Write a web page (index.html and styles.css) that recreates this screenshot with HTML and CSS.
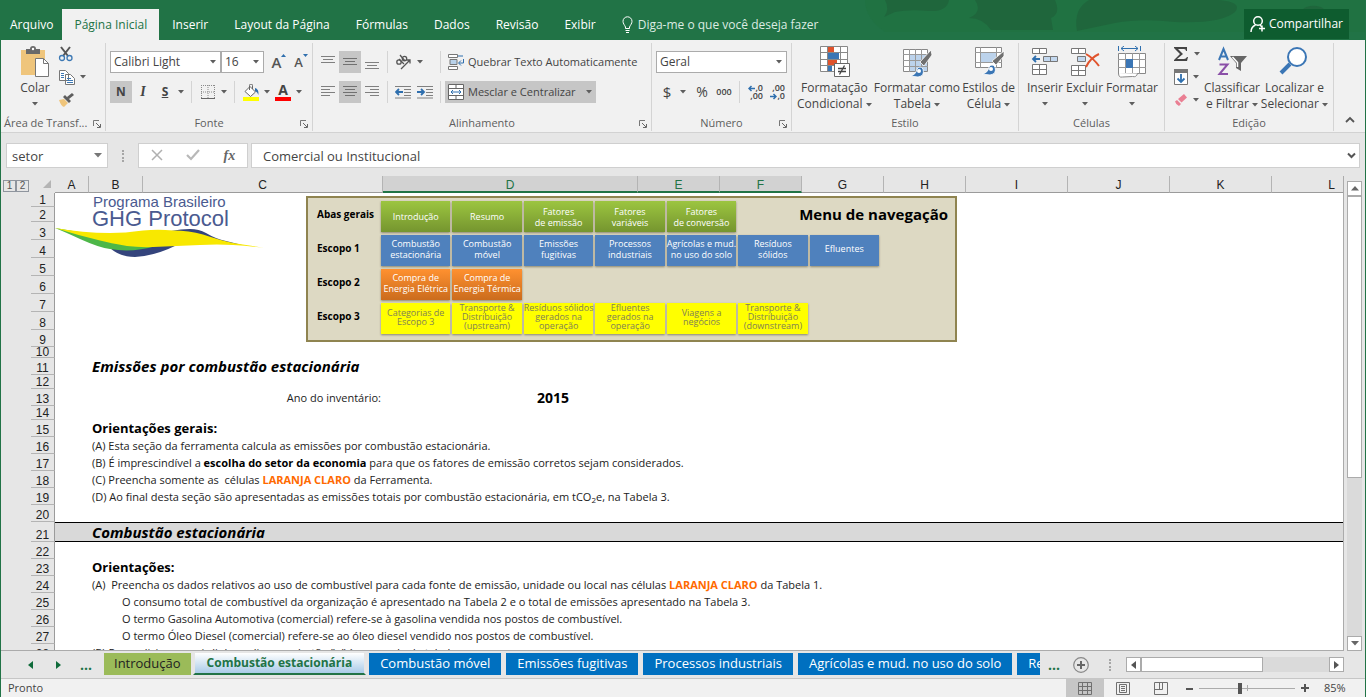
FILE: index.html
```html
<!DOCTYPE html>
<html lang="pt-BR">
<head>
<meta charset="utf-8">
<title>GHG Protocol - Excel</title>
<link rel="stylesheet" href="styles.css">
</head>
<body>
<svg class="defs" aria-hidden="true">
  <symbol id="caret" viewBox="0 0 6 4"><path d="M0 0h6L3 3.5z" fill="#5e5e5e"/></symbol>
  <symbol id="launch" viewBox="0 0 8 8"><path d="M.5 6V.5H6" fill="none" stroke="#777"/><path d="M3 3l4 4M7.5 4v3.5H4" fill="none" stroke="#666"/></symbol>
</svg>
<div class="app">
  <header class="titlebar">
    <svg class="texture" viewBox="0 0 500 32" aria-hidden="true">
      <path d="M0 0h500v32H20Q0 18 0 0z" fill="#20703f" opacity=".45"/>
      <g fill="#1f663c"><path d="M20 0h64q-2 12-20 11-20-2-34 1l-11 5q6-8 1-17z"/><path d="M110 0h80q6 14-4 18l2 12h-62q-8-12-22-12 14-6 6-18z"/><path d="M224 0h130q24 2 16 12-14 12-60 10-34-4-60 1l-38 8q-4-22 12-31z"/><path d="M437 10a14 10 0 0 1 23 0z"/></g>
    </svg>
    <nav class="tabs">
      <button class="tab">Arquivo</button>
      <button class="tab tab-on">Página Inicial</button>
      <button class="tab">Inserir</button>
      <button class="tab">Layout da Página</button>
      <button class="tab">Fórmulas</button>
      <button class="tab">Dados</button>
      <button class="tab">Revisão</button>
      <button class="tab">Exibir</button>
    </nav>
    <button class="tell"><svg width="11" height="18" viewBox="0 0 11 18" fill="none" stroke="#fff"><path d="M3.5 12.500V11C2.500 9 1 7.500 1 5.300a4.500 4.500 0 0 1 9 0C10 7.500 8.500 9 7.500 11v1.500zM3.500 14.500h4M4 16.500h3"/></svg>Diga-me o que você deseja fazer</button>
    <button class="share"><svg width="16" height="18" viewBox="0 0 16 18" fill="none" stroke="#fff" stroke-width="1.500"><circle cx="8" cy="6" r="4.300"/><path d="M1 17c0-4 2-6 4.500-7M10 10l2 2M12 10.500v6M9 13.500h6"/></svg>Compartilhar</button>
  </header>

  <section class="ribbon" aria-label="Página Inicial">
    <div class="group g-clip">
      <div class="body">
        <button class="big"><svg width="30" height="32" viewBox="0 0 30 32"><path d="M1 4h24v25H1z" fill="#efc57c"/><path d="M6 3h4a3 3 0 0 1 6 0h4v5H6z" fill="#6a6a6a"/><circle cx="13" cy="3" r="1.200" fill="#fff"/><path d="M15.500 12.500h8l5 5v13h-13z" fill="#fff" stroke="#777"/><path d="M23.500 12.500v5h5" fill="none" stroke="#777"/></svg><span>Colar</span><svg class="caret"><use href="#caret"/></svg></button>
        <div class="smalls">
          <button class="ico" aria-label="Recortar"><svg width="16" height="16" viewBox="0 0 16 16" fill="none"><path d="M3 1l7 9M12 1L5 10" stroke="#555" stroke-width="2"/><circle cx="4" cy="12" r="2.500" stroke="#3c78b4" stroke-width="1.300"/><circle cx="11.500" cy="12" r="2.500" stroke="#3c78b4" stroke-width="1.300"/></svg></button>
          <button class="ico ico-drop" aria-label="Copiar"><svg width="16" height="15" viewBox="0 0 16 15"><path d="M.5.500h6l3 3v7h-9zM6.500 4.500h5l4 4v6h-9z" fill="#fff" stroke="#777"/><path d="M2 3.500h3M2 5.500h3M2 7.500h3M8 8.500h4M8 10.500h6M8 12.500h6" stroke="#3c78b4"/></svg><svg class="caret"><use href="#caret"/></svg></button>
          <button class="ico" aria-label="Pincel de formatação"><svg width="16" height="15" viewBox="0 0 16 15"><path d="M1 7l5-1 4 4-4 4q-3-1-5-7z" fill="#efc57c"/><path d="M5 4l2-2 6 6-2 2zM9 4l5-4 2 2-5 4z" fill="#5e5e5e"/></svg></button>
        </div>
      </div>
      <div class="foot foot-left">Área de Transf...<svg class="launch"><use href="#launch"/></svg></div>
    </div>

    <div class="group g-font">
      <div class="body lines">
        <div class="line">
          <label class="combo c-font"><select aria-label="Fonte"><option>Calibri Light</option></select><svg class="caret"><use href="#caret"/></svg></label><label class="combo c-size"><select aria-label="Tamanho da fonte"><option>16</option></select><svg class="caret"><use href="#caret"/></svg></label>
          <button class="ico grow">A<svg width="5" height="3"><path d="M0 3h5L2.500 0z" fill="#2f6fae"/></svg></button>
          <button class="ico grow shrink">A<svg width="5" height="3"><path d="M0 0h5L2.500 3z" fill="#2f6fae"/></svg></button>
        </div>
        <div class="line">
          <button class="ico on"><b>N</b></button>
          <button class="ico"><b class="serif">I</b></button>
          <button class="ico"><b class="under">S</b></button>
          <button class="drop" aria-label="Sublinhado"><svg class="caret"><use href="#caret"/></svg></button>
          <i class="sep"></i>
          <button class="ico" aria-label="Bordas"><svg width="14" height="14" viewBox="0 0 14 14" fill="none" stroke="#8a8a8a"><path d="M.5 0v13M13.500 0v13M0 .5h14M7 0v13M0 7h14" stroke-dasharray="1 1"/><path d="M0 13.500h14" stroke="#666"/></svg></button>
          <button class="drop" aria-label="Mais bordas"><svg class="caret"><use href="#caret"/></svg></button>
          <i class="sep"></i>
          <button class="ico" aria-label="Cor de preenchimento"><svg width="17" height="17" viewBox="0 0 17 17"><path d="M2 7.500l5-5 5.500 5.500-5 4.500z" fill="#fff" stroke="#666"/><path d="M6.500 6V1.500a1.500 1.500 0 0 1 3 0V5" fill="none" stroke="#666"/><path d="M12 4q4 1 3.500 7-1-3-3.500-4z" fill="#2f6fae"/><path d="M0 13h16v4H0z" fill="#ff0"/></svg></button>
          <button class="drop" aria-label="Mais cores"><svg class="caret"><use href="#caret"/></svg></button>
          <button class="ico fontcolor">A</button>
          <button class="drop" aria-label="Mais cores da fonte"><svg class="caret"><use href="#caret"/></svg></button>
        </div>
      </div>
      <div class="foot">Fonte<svg class="launch"><use href="#launch"/></svg></div>
    </div>

    <div class="group g-align">
      <div class="body lines">
        <div class="line">
          <button class="ico" aria-label="Alinhar acima"><svg width="14" height="14" stroke="#808080"><path d="M0 1.500h14M2 4.500h10M0 7.500h14"/></svg></button>
          <button class="ico on" aria-label="Alinhar no meio"><svg width="14" height="14" stroke="#707070"><path d="M0 3.500h14M2 6.500h10M0 9.500h14"/></svg></button>
          <button class="ico" aria-label="Alinhar embaixo"><svg width="14" height="14" stroke="#808080"><path d="M0 7.500h14M2 10.500h10M0 13.500h14"/></svg></button>
          <i class="sep"></i>
          <div class="pair"><button class="ico ico-drop" aria-label="Orientação"><svg width="17" height="16" viewBox="0 0 17 16" fill="none" stroke="#555" stroke-width="1.300"><circle cx="4" cy="8" r="2.200"/><path d="M4 5l5 5M5 1l5 6"/><circle cx="9.500" cy="4.500" r="2.200"/><path d="M6 15L15 6M11.500 6H15v3.500"/></svg><svg class="caret"><use href="#caret"/></svg></button></div>
          <i class="sep"></i>
          <button class="wide"><svg width="16" height="16" viewBox="0 0 16 16"><path d="M.5.500h9v3h-9zM.5 12.500h9v3h-9z" fill="#fff" stroke="#777"/><path d="M2 5.500h7v5H2z" fill="#b9d2ea" stroke="#777"/><path d="M10 2h5M15.500 5v4H11M13 6.500L10.500 9l2.500 2.500" fill="none" stroke="#2f6fae"/></svg>Quebrar Texto Automaticamente</button>
        </div>
        <div class="line">
          <button class="ico" aria-label="Alinhar à esquerda"><svg width="14" height="14" stroke="#808080"><path d="M0 1.500h14M0 4.500h9M0 7.500h14M0 10.500h9"/></svg></button>
          <button class="ico on" aria-label="Centralizar"><svg width="14" height="14" stroke="#707070"><path d="M0 1.500h14M2 4.500h10M0 7.500h14M2 10.500h10"/></svg></button>
          <button class="ico" aria-label="Alinhar à direita"><svg width="14" height="14" stroke="#808080"><path d="M0 1.500h14M5 4.500h9M0 7.500h14M5 10.500h9"/></svg></button>
          <i class="sep"></i>
          <div class="pair">
            <button class="ico" aria-label="Diminuir recuo"><svg width="16" height="14" fill="none" stroke="#808080"><path d="M0 1.500h16M9 4.500h7M9 7.500h7M9 10.500h7M0 13h16"/><path d="M1 7h7M4 4L1 7l3 3" stroke="#2f6fae" stroke-width="1.800"/></svg></button>
            <button class="ico" aria-label="Aumentar recuo"><svg width="16" height="14" fill="none" stroke="#808080"><path d="M0 1.500h16M9 4.500h7M9 7.500h7M9 10.500h7M0 13h16"/><path d="M0 7h7M4 4l3 3-3 3" stroke="#2f6fae" stroke-width="1.800"/></svg></button>
          </div>
          <i class="sep"></i>
          <button class="wide on"><svg width="16" height="16" viewBox="0 0 16 16"><path d="M.5.500h15v15H.5z" fill="#fff" stroke="#666"/><path d="M0 4.500h16M0 11.500h16M8 0v4M8 12v4" stroke="#666"/><path d="M3 8h10M5 6L3 8l2 2M11 6l2 2-2 2" fill="none" stroke="#2f6fae"/></svg>Mesclar e Centralizar<svg class="caret"><use href="#caret"/></svg></button>
        </div>
      </div>
      <div class="foot">Alinhamento<svg class="launch"><use href="#launch"/></svg></div>
    </div>

    <div class="group g-num">
      <div class="body lines">
        <div class="line"><label class="combo c-num"><select aria-label="Formato de número"><option>Geral</option></select><svg class="caret"><use href="#caret"/></svg></label></div>
        <div class="line">
          <button class="ico money">$</button>
          <button class="drop" aria-label="Moedas"><svg class="caret"><use href="#caret"/></svg></button>
          <button class="ico pct">%</button>
          <button class="ico zeros">000</button>
          <i class="sep"></i>
          <button class="ico dec"><span><svg width="7" height="7" fill="none" stroke="#2f6fae" stroke-width="1.500"><path d="M1 3.500h6M3.500 1L1 3.500 3.500 6"/></svg>,0</span><span>,00</span></button>
          <button class="ico dec"><span>,00</span><span><svg width="7" height="7" fill="none" stroke="#2f6fae" stroke-width="1.500"><path d="M0 3.500h6M3.500 1L6 3.500 3.500 6"/></svg>,0</span></button>
        </div>
      </div>
      <div class="foot">Número<svg class="launch"><use href="#launch"/></svg></div>
    </div>

    <div class="group g-style">
      <div class="body">
        <button class="big"><svg width="32" height="32" viewBox="0 0 32 32"><path d="M2.500.500h27v25h-27z" fill="#fff" stroke="#888"/><path d="M2 6.500h28M2 13.500h28M2 19.500h28M9.500 0v26M22.500 0v26" stroke="#888"/><path d="M10 1h6v5h-6zM10 14h9v5h-9z" fill="#e0532c"/><path d="M10 7h11v6H10zM10 20h4v5h-4z" fill="#3b76b5"/><path d="M16.500 17.500h15v13h-15z" fill="#fff" stroke="#666"/><path d="M20 22.500h8M20 25.500h8M26.500 19.500l-5 9" stroke="#444" stroke-width="1.300"/></svg><span>Formatação<br>Condicional <svg class="caret"><use href="#caret"/></svg></span></button>
        <button class="big"><svg width="32" height="32" viewBox="0 0 32 32"><path d="M2.500 3.500h24v22h-24z" fill="#fff" stroke="#888"/><path d="M9 9h17v16H9z" fill="#bcd3ec"/><path d="M2 8.500h25M2 14.500h25M2 20.500h25M8.500 3v23M14.500 3v23M20.500 3v23" stroke="#999"/><path d="M30 4l1 5-8 11-4-4z" fill="#707070" stroke="#fff" stroke-width=".8"/><path d="M9 30q6-1 7-7 3-4 6 0 2 7-5 8z" fill="#3b76b5" stroke="#fff" stroke-width=".8"/><circle cx="18" cy="25" r="2" fill="#fff"/></svg><span>Formatar como<br>Tabela <svg class="caret"><use href="#caret"/></svg></span></button>
        <button class="big"><svg width="32" height="32" viewBox="0 0 32 32"><path d="M2.500 1.500h26v20h-26z" fill="#fff" stroke="#888"/><path d="M8 7h16v9H8z" fill="#bcd3ec"/><path d="M2 6.500h27M2 16.500h27M7.500 1v21M23.500 1v21" stroke="#999"/><path d="M31 5v5l-8 9-4-4z" fill="#707070" stroke="#fff" stroke-width=".8"/><path d="M9 28q6-1 7-7 3-4 6 0 2 7-5 8z" fill="#3b76b5" stroke="#fff" stroke-width=".8"/><circle cx="18" cy="23" r="2" fill="#fff"/></svg><span>Estilos de<br>Célula <svg class="caret"><use href="#caret"/></svg></span></button>
      </div>
      <div class="foot">Estilo</div>
    </div>

    <div class="group g-cells">
      <div class="body">
        <button class="big"><svg width="28" height="32" viewBox="0 0 28 32"><path d="M1.500 2.500h14v5h-14zM8.500 2.500v5M1.500 18.500h14v10h-14zM8.500 18.500v10M1.500 23.500h14" fill="#fff" stroke="#777"/><path d="M12.500 10.500h14v5h-14zM19.500 10.500v5" fill="#c3d8ef" stroke="#777"/><path d="M2 13h7M5 10l-3 3 3 3" fill="none" stroke="#2f6fae" stroke-width="1.800"/></svg><span>Inserir</span><svg class="caret"><use href="#caret"/></svg></button>
        <button class="big"><svg width="30" height="32" viewBox="0 0 30 32"><path d="M1.500 2.500h14v5h-14zM8.500 2.500v5M1.500 19.500h14v10h-14zM8.500 19.500v10M1.500 24.500h14" fill="#fff" stroke="#777"/><path d="M7.500 10.500h8v5h-8z" fill="#c3d8ef" stroke="#777"/><path d="M16 8q7 4 13 12M29 8q-9 4-13 13" fill="none" stroke="#e0532c" stroke-width="2"/></svg><span>Excluir</span><svg class="caret"><use href="#caret"/></svg></button>
        <button class="big"><svg width="30" height="32" viewBox="0 0 30 32"><path d="M1.500 0v5M23.500 0v5M4 2.500h17M7 0L4 2.500 7 5M18 0l3 2.500L18 5" fill="none" stroke="#2f6fae"/><path d="M1.500 7.500h27v20h-27z" fill="#fff" stroke="#888"/><path d="M1 13.500h28M1 21.500h28M8.500 7v21M15.500 7v21M22.500 7v21" stroke="#999"/><path d="M9 13h7v9H9z" fill="#3b76b5"/><path d="M1.500 27q0 5 4 4l10-.5q4 1 5-3" fill="#fff" stroke="#888"/></svg><span>Formatar</span><svg class="caret"><use href="#caret"/></svg></button>
      </div>
      <div class="foot">Células</div>
    </div>

    <div class="group g-edit">
      <div class="body">
        <div class="smalls">
          <button class="ico ico-drop" aria-label="AutoSoma"><svg width="16" height="16" viewBox="0 0 16 16"><path d="M1 1h13v4h-1q0-2-2-2H5l5 5-6 5h7q2 0 3-2h1l-1 4H1v-1l6-6-6-6z" fill="#444"/></svg><svg class="caret"><use href="#caret"/></svg></button>
          <button class="ico ico-drop" aria-label="Preencher"><svg width="14" height="16" viewBox="0 0 14 16"><path d="M.5.500h13v15H.5z" fill="#fff" stroke="#777"/><path d="M0 0h14v4H0z" fill="#777"/><path d="M7 5v8M3.500 9.500L7 13l3.500-3.500" fill="none" stroke="#2f6fae" stroke-width="1.800"/></svg><svg class="caret"><use href="#caret"/></svg></button>
          <button class="ico ico-drop" aria-label="Limpar"><svg width="14" height="14" viewBox="0 0 14 14"><path d="M4 6l6-5 3 3.500-5.500 5zM1 8.500L3 7l4 4-2 2q-3-1-4-4.500z" fill="#ea7f93"/></svg><svg class="caret"><use href="#caret"/></svg></button>
        </div>
        <button class="big"><svg width="30" height="32" viewBox="0 0 30 32" fill="none"><path d="M2 14L6.500 3 11 14M3.500 10.500h6" stroke="#3b76b5" stroke-width="2"/><path d="M2.500 18.500h8l-8 9.500h8.500" stroke="#8b50a8" stroke-width="2"/><path d="M13 10h17l-6 7v8l-5-3v-5z" fill="#666"/><path d="M15.500 11l5 5.500v4.500" stroke="#fff" stroke-width="1.500"/></svg><span>Classificar<br>e Filtrar <svg class="caret"><use href="#caret"/></svg></span></button>
        <button class="big"><svg width="30" height="32" viewBox="0 0 30 32" fill="none"><circle cx="18" cy="11" r="9" fill="#fff" stroke="#3b76b5" stroke-width="2"/><path d="M11 18L2 27" stroke="#3b76b5" stroke-width="4"/></svg><span>Localizar e<br>Selecionar <svg class="caret"><use href="#caret"/></svg></span></button>
      </div>
      <div class="foot">Edição</div>
    </div>
    <button class="collapse" aria-label="Recolher"><svg width="10" height="7" fill="none" stroke="#555" stroke-width="1.800"><path d="M1 6l4-4 4 4"/></svg></button>
  </section>

  <section class="formula" aria-label="Barra de fórmulas">
    <label class="namebox"><input value="setor" aria-label="Caixa de nome"><svg width="8" height="5"><path d="M0 0h8L4 4.500z" fill="#777"/></svg></label>
    <i class="dots"></i>
    <div class="fx">
      <button aria-label="Cancelar"><svg width="12" height="12" stroke="#b0b0b0" stroke-width="1.500"><path d="M1 1l10 10M11 1L1 11"/></svg></button>
      <button aria-label="Inserir"><svg width="14" height="12" fill="none" stroke="#b8b8b8" stroke-width="2.200"><path d="M1 6l4 4 8-9"/></svg></button>
      <button class="fn">fx</button>
    </div>
    <label class="expr"><input value="Comercial ou Institucional" aria-label="Fórmula"><svg width="9" height="7" fill="none" stroke="#555" stroke-width="2"><path d="M1 1.500l3.500 3.500L8 1.500"/></svg></label>
  </section>

  <main class="work">
    <div class="sheet">
      <table class="grid">
        <colgroup><col class="w-out"><col class="w-row"><col class="w-a"><col class="w-b"><col class="w-c"><col class="w-d"><col class="w-e"><col class="w-e"><col class="w-e"><col class="w-e"><col class="w-i"><col class="w-i"><col class="w-i"><col></colgroup>
        <thead>
          <tr><td class="levels"><button>1</button><button>2</button></td><td class="corner"><svg width="8" height="8"><path d="M8 0v8H0z" fill="#b4b4b4"/></svg></td><th>A</th><th>B</th><th>C</th><th class="sel">D</th><th class="sel">E</th><th class="sel">F</th><th>G</th><th>H</th><th>I</th><th>J</th><th>K</th><th class="cut">L</th></tr>
        </thead>
        <tbody>
          <tr class="h14"><td class="outline" rowspan="28"></td><th>1</th><td colspan="12"></td></tr>
          <tr class="h15"><th>2</th><td colspan="12"></td></tr>
          <tr class="h18"><th>3</th><td colspan="12"></td></tr>
          <tr class="h18"><th>4</th><td colspan="12"></td></tr>
          <tr class="h18"><th>5</th><td colspan="12"></td></tr>
          <tr class="h18"><th>6</th><td colspan="12"></td></tr>
          <tr class="h18"><th>7</th><td colspan="12"></td></tr>
          <tr class="h18"><th>8</th><td colspan="12"></td></tr>
          <tr class="h17"><th>9</th><td colspan="12"></td></tr>
          <tr class="h11"><th>10</th><td colspan="12"></td></tr>
          <tr class="h17"><th>11</th><td></td><td class="title" colspan="11">Emissões por combustão estacionária</td></tr>
          <tr class="h14"><th>12</th><td colspan="12"></td></tr>
          <tr class="h17"><th>13</th><td></td><td class="right" colspan="2">Ano do inventário:</td><td class="year" colspan="2">2015</td><td colspan="7"></td></tr>
          <tr class="h14"><th>14</th><td colspan="12"></td></tr>
          <tr class="h17"><th>15</th><td></td><td class="sub" colspan="11">Orientações gerais:</td></tr>
          <tr class="h17"><th>16</th><td></td><td colspan="11">(A) Esta seção da ferramenta calcula as emissões por combustão estacionária.</td></tr>
          <tr class="h17"><th>17</th><td></td><td colspan="11">(B) É imprescindível a <b>escolha do setor da economia</b> para que os fatores de emissão corretos sejam considerados.</td></tr>
          <tr class="h17"><th>18</th><td></td><td colspan="11">(C) Preencha somente as&nbsp; células <b class="orange">LARANJA CLARO</b> da Ferramenta.</td></tr>
          <tr class="h17"><th>19</th><td></td><td colspan="11">(D) Ao final desta seção são apresentadas as emissões totais por combustão estacionária, em tCO<sub>2</sub>e, na Tabela 3.</td></tr>
          <tr class="h17"><th>20</th><td colspan="12"></td></tr>
          <tr class="h20 band"><th>21</th><td></td><td class="title" colspan="11">Combustão estacionária</td></tr>
          <tr class="h17"><th>22</th><td colspan="12"></td></tr>
          <tr class="h17"><th>23</th><td></td><td class="sub" colspan="11">Orientações:</td></tr>
          <tr class="h17"><th>24</th><td></td><td colspan="11">(A)&nbsp; Preencha os dados relativos ao uso de combustível para cada fonte de emissão, unidade ou local nas células <b class="orange">LARANJA CLARO</b> da Tabela 1.</td></tr>
          <tr class="h17"><th>25</th><td></td><td class="indent" colspan="11">O consumo total de combustível da organização é apresentado na Tabela 2 e o total de emissões apresentado na Tabela 3.</td></tr>
          <tr class="h17"><th>26</th><td></td><td class="indent" colspan="11">O termo Gasolina Automotiva (comercial) refere-se à gasolina vendida nos postos de combustível.</td></tr>
          <tr class="h17"><th>27</th><td></td><td class="indent" colspan="11">O termo Óleo Diesel (comercial) refere-se ao óleo diesel vendido nos postos de combustível.</td></tr>
          <tr class="h17"><th>28</th><td></td><td colspan="11">(B) Para adicionar mais linhas, clique no botão "+" à esquerda da tabela.</td></tr>
        </tbody>
      </table>

      <div class="logo">
        <div class="logo-small">Programa Brasileiro</div>
        <div class="logo-big">GHG Protocol</div>
        <svg viewBox="0 0 210 30" width="210" height="30" aria-hidden="true"><path d="M55 20q10 9 25 9 20-1 42-12l-30-2z" fill="#34447c"/><path d="M116 3q10-2 19-2 9 0 16 4 10 6 20 8l16 4-12-1-34-9z" fill="#34447c"/><path d="M0 0Q10 4 25 11 45 20 55 21q22 4 46-3L60 10z" fill="#4db748"/><path d="M0 0Q28 5 55 5 70 5 88 2.500q15-1.500 30 0 16 0 30 4 18 6 30 8.500l32 5q-16-2-32-3-16-1-33 0L98 19Q84 19.500 72 18 55 15 45 12.500 22 7 0 0z" fill="#f8e800"/></svg>
      </div>

      <nav class="menu" aria-label="Menu de navegação">
        <div class="rows">
          <div class="mrow green"><span class="mlabel">Abas gerais</span><div class="cells"><a href="#">Introdução</a><a href="#">Resumo</a><a href="#">Fatores<br>de emissão</a><a href="#">Fatores<br>variáveis</a><a href="#">Fatores<br>de conversão</a></div></div>
          <div class="mrow blue"><span class="mlabel">Escopo 1</span><div class="cells"><a href="#">Combustão<br>estacionária</a><a href="#">Combustão<br>móvel</a><a href="#">Emissões<br>fugitivas</a><a href="#">Processos<br>industriais</a><a href="#">Agrícolas e mud.<br>no uso do solo</a><a href="#">Resíduos<br>sólidos</a><a href="#">Efluentes</a></div></div>
          <div class="mrow amber"><span class="mlabel">Escopo 2</span><div class="cells"><a href="#">Compra de<br>Energia Elétrica</a><a href="#">Compra de<br>Energia Térmica</a></div></div>
          <div class="mrow yellow"><span class="mlabel">Escopo 3</span><div class="cells"><a href="#">Categorias de<br>Escopo 3</a><a href="#">Transporte &amp;<br>Distribuição<br>(upstream)</a><a href="#">Resíduos sólidos<br>gerados na<br>operação</a><a href="#">Efluentes<br>gerados na<br>operação</a><a href="#">Viagens a<br>negócios</a><a href="#">Transporte &amp;<br>Distribuição<br>(downstream)</a></div></div>
        </div>
        <h2>Menu de navegação</h2>
      </nav>
    </div>
    <div class="vscroll">
      <button aria-label="Rolar para cima"><svg width="8" height="5"><path d="M0 4.500h8L4 0z" fill="#666"/></svg></button>
      <div class="track"><div class="thumb"></div></div>
      <button aria-label="Rolar para baixo"><svg width="8" height="5"><path d="M0 0h8L4 4.500z" fill="#666"/></svg></button>
    </div>
  </main>

  <footer class="sheets">
    <button class="arrow" aria-label="Anterior"><svg width="5" height="8"><path d="M5 0v8L0 4z" fill="#0f6b3a"/></svg></button>
    <button class="arrow" aria-label="Próxima"><svg width="5" height="8"><path d="M0 0v8l5-4z" fill="#0f6b3a"/></svg></button>
    <button class="more">...</button>
    <nav class="stabs">
      <button class="stab s-green">Introdução</button>
      <button class="stab s-on">Combustão estacionária</button>
      <button class="stab">Combustão móvel</button>
      <button class="stab">Emissões fugitivas</button>
      <button class="stab">Processos industriais</button>
      <button class="stab">Agrícolas e mud. no uso do solo</button>
      <button class="stab s-last">Resíduos sólidos</button>
    </nav>
    <button class="more">...</button>
    <button class="add" aria-label="Nova planilha"><svg width="16" height="16" fill="none" stroke="#888"><circle cx="8" cy="8" r="7.300" stroke-width="1.200"/><path d="M8 4v8M4 8h8" stroke="#666" stroke-width="2"/></svg></button>
    <i class="dots"></i>
    <div class="hscroll">
      <button aria-label="Rolar para a esquerda"><svg width="5" height="8"><path d="M5 0v8L0 4z" fill="#555"/></svg></button>
      <div class="track"><div class="thumb"></div></div>
      <button aria-label="Rolar para a direita"><svg width="5" height="8"><path d="M0 0v8l5-4z" fill="#555"/></svg></button>
    </div>
  </footer>

  <footer class="status">
    <span class="ready">Pronto</span>
    <button class="view view-on" aria-label="Normal"><svg width="14" height="13" fill="none" stroke="#707070"><path d="M.5.500h13v12H.5zM0 4.500h14M0 8.500h14M4.500 0v13M9.500 0v13"/></svg></button>
    <button class="view" aria-label="Layout da Página"><svg width="14" height="13" fill="none" stroke="#707070"><path d="M.5.500h13v12H.5zM3.500 2.500h7v8h-7zM5 4.500h4M5 6.500h4M5 8.500h4"/></svg></button>
    <button class="view" aria-label="Quebra de página"><svg width="14" height="13" fill="none" stroke="#707070"><path d="M.5.500h13v12H.5zM.5 7.500h8V0M5.500 0v7"/></svg></button>
    <div class="zoom">
      <button aria-label="Menos zoom"><svg width="7" height="7"><path d="M0 3h7v2H0z" fill="#555"/></svg></button>
      <input type="range" min="0" max="100" value="42" aria-label="Zoom">
      <button aria-label="Mais zoom"><svg width="8" height="8"><path d="M0 3h8v2H0zM3 0h2v8H3z" fill="#555"/></svg></button>
    </div>
    <span class="percent">85%</span>
  </footer>
</div>
</body>
</html>
```
FILE: styles.css
```css
* { box-sizing: border-box; }
body { margin: 0; font: 12px/16px "Open Sans", "Noto Sans", sans-serif; color: #444; }
button, input, select { font: inherit; color: inherit; margin: 0; padding: 0; border: 0; background: none; }
.defs { display: none; }
svg { flex: none; }
.caret { width: 6px; height: 4px; }
.launch { width: 8px; height: 8px; }

.app { display: flex; flex-direction: column; height: 100vh; overflow: hidden; background: #e6e6e6; border: solid #217346; border-width: 0 1px; }

/* Title bar */
.titlebar { position: relative; display: flex; align-items: flex-end; height: 40px; flex: none; background: #217346; color: #fff; }
.texture { position: absolute; right: 0; top: 0; width: 500px; height: 32px; }
.tabs { display: flex; position: relative; }
.tab { height: 31px; padding: 0 13px; white-space: nowrap; }
.tab:first-child { padding: 0 9px; }
.tab-on { background: #f1f1f1; color: #217346; padding: 0 12px; }
.tell { position: relative; display: flex; align-items: center; gap: 5px; height: 31px; margin-left: 13px; color: #dcebe2; }
.share { position: relative; display: flex; align-items: center; gap: 3px; height: 30px; margin-left: auto; margin-right: 16px; margin-bottom: 1px; padding: 0 6px; background: #0e5c2f; }

/* Ribbon */
.ribbon { display: flex; flex: none; height: 93px; padding: 3px 0 1px; background: #f1f1f1; border-bottom: 1px solid #d2d2d2; }
.group { display: flex; flex-direction: column; flex: none; border-right: 1px solid #d4d4d4; }
.g-clip { width: 105px; }
.g-font { width: 207px; }
.g-align { width: 339px; }
.g-num { width: 140px; }
.g-style { width: 227px; }
.g-cells { width: 146px; }
.g-edit { width: 169px; }
.body { display: flex; flex: 1; }
.foot { position: relative; height: 16px; text-align: center; font-size: 11px; color: #5e5e5e; }
.foot .launch { position: absolute; right: 4px; top: 5px; }
.foot-left { text-align: left; padding-left: 3px; }
.big { display: flex; flex-direction: column; align-items: center; padding-top: 3px; white-space: nowrap; }
.big > span { margin-top: 2px; }
.big > .caret { margin-top: 6px; }
.big span .caret { vertical-align: middle; }
.g-clip .big { width: 54px; padding-left: 14px; }
.smalls { display: flex; flex-direction: column; gap: 1px; }
.ico { display: flex; align-items: center; justify-content: center; width: 22px; height: 22px; flex: none; }
.ico-drop { width: 34px; gap: 5px; }
.on { background: #c6c6c6; }
.lines { flex-direction: column; gap: 8px; padding: 8px 0 0 4px; }
.line { display: flex; height: 22px; }
.sep { width: 1px; margin: 0 4px; background: #d4d4d4; flex: none; }
.drop { display: flex; align-items: center; justify-content: center; width: 10px; flex: none; }
.combo { display: flex; align-items: center; flex: none; background: #fff; border: 1px solid #ababab; height: 22px; padding-right: 4px; }
.combo select { appearance: none; flex: 1; min-width: 0; padding-left: 3px; outline: none; }
.c-font { width: 111px; }
.c-size { width: 43px; margin-right: 4px; }
.c-num { width: 131px; }
.grow { font-size: 15px; font-weight: 600; color: #555; align-items: flex-start; padding-top: 3px; }
.shrink { font-size: 13px; }
.serif { font-family: "Liberation Serif", serif; font-style: italic; font-size: 14px; }
.under { text-decoration: underline; }
.g-font .sep { margin: 0 5px; }
.fontcolor { font-weight: 700; font-size: 14px; line-height: 18px; position: relative; align-items: flex-start; }
.fontcolor::after { content: ""; position: absolute; left: 3px; right: 3px; bottom: 2px; height: 4px; background: #f00; }
.pair { display: flex; width: 44px; }
.wide { display: flex; align-items: center; gap: 4px; padding: 0 4px 0 3px; font-size: 11px; white-space: nowrap; }
.wide .caret { margin-left: 6px; }
.money { font-size: 15px; }
.g-num .drop { margin-right: 3px; }
.pct { font-size: 14px; }
.zeros { font-size: 9px; font-weight: 600; }
.dec { flex-direction: column; align-items: flex-end; font-size: 9px; line-height: 8px; font-weight: 600; padding-right: 3px; }
.dec span { display: flex; align-items: center; }
.g-style .body { padding: 0 3px 0 5px; justify-content: space-between; }
.g-cells .body { padding: 0 6px 0 8px; justify-content: space-between; }
.g-edit .body { padding: 0 5px 0 4px; justify-content: space-between; }
.collapse { margin-left: auto; padding: 0 10px 4px; align-self: flex-end; height: 20px; }

/* Formula bar */
.formula { display: flex; flex: none; height: 43px; padding: 10px 5px 8px; font-size: 13px; }
.namebox, .fx, .expr { display: flex; align-items: center; background: #fff; border: 1px solid #cfcfcf; }
.namebox { width: 102px; padding: 0 5px; }
.namebox input, .expr input { flex: 1; min-width: 0; outline: none; }
.dots { width: 2px; height: 12px; margin: auto 14px; flex: none; border-left: 2px dotted #a6a6a6; }
.fx { width: 110px; justify-content: space-around; }
.fn { font: italic bold 14px/16px "Liberation Serif", serif; color: #666; }
.expr { flex: 1; margin-left: 3px; padding: 0 3px 0 11px; }

/* Worksheet */
.work { display: flex; flex: 1; min-height: 0; }
.sheet { position: relative; flex: 1; min-width: 0; overflow: hidden; background: #fff; border-right: 1px solid #ababab; border-bottom: 1px solid #ababab; }
.grid { width: 100%; table-layout: fixed; border-collapse: separate; border-spacing: 0; color: #222; font-size: 11px; line-height: 13px; }
.w-out { width: 30px; }
.w-row { width: 24px; }
.w-a { width: 34px; }
.w-b { width: 54px; }
.w-c { width: 240px; }
.w-d { width: 255px; }
.w-e { width: 82px; }
.w-i { width: 102px; }
.grid td, .grid th { padding: 0; white-space: nowrap; overflow: hidden; }
.grid th { font: 12px/11px "Liberation Sans", sans-serif; background: #e6e6e6; color: #222; }
.grid thead th { height: 17px; border-right: 1px solid #b4b4b4; border-bottom: 1px solid #9b9b9b; vertical-align: middle; padding-top: 3px; }
.grid thead td { background: #e6e6e6; }
.grid thead .sel { background: #d2d2d2; color: #217346; border-bottom: 2px solid #217346; }
.grid thead .cut { text-align: right; padding-right: 8px; border-right: 0; }
.grid .levels { vertical-align: bottom; line-height: 10px; padding-bottom: 1px; }
.levels button { width: 13px; height: 12px; margin: 0; border: 1px solid #8f959e; font: 10px/10px "Liberation Sans", sans-serif; color: #555; }
.levels button:first-child { margin-left: 2px; }
.corner { text-align: right; vertical-align: bottom; }
.grid .corner { padding: 0 4px 3px 0; }
.grid tbody td { vertical-align: middle; padding-left: 3px; }
.grid tbody .outline { background: #e6e6e6; }
.grid tbody th { border-right: 1px solid #9b9b9b; border-bottom: 1px solid #b4b4b4; vertical-align: bottom; }
.h11 { height: 11px; }
.h11 th { line-height: 9px; }
.h14 { height: 14px; }
.h15 { height: 15px; }
.h17 { height: 17px; }
.h18 { height: 18px; }
.h20 { height: 20px; }
.title { font-size: 15px; line-height: 15px; font-weight: 700; font-style: italic; color: #000; }
.sub { font-size: 13px; line-height: 15px; font-weight: 700; color: #000; }
.year { font-size: 14px; line-height: 15px; font-weight: 700; color: #000; text-align: center; }
.right { text-align: right; }
.grid .right { padding-right: 2px; }
.grid .indent { padding-left: 33px; }
.grid b { color: #000; }
.grid .orange { color: #ff6a00; }
.grid sub { font-size: 8px; line-height: 0; vertical-align: -2px; }
.band td { background: #d9d9d9; border-top: 1px solid #000; border-bottom: 1px solid #000; }

/* Floating objects on the worksheet */
.logo { position: absolute; left: 54px; top: 18px; width: 212px; color: #4a5a90; font-family: "Liberation Sans", sans-serif; }
.logo-small { padding-left: 38px; font-size: 15px; line-height: 16px; }
.logo-big { padding-left: 37px; font-size: 22px; line-height: 18px; }
.logo svg { display: block; }
.menu { position: absolute; left: 305px; top: 20px; width: 651px; display: flex; justify-content: space-between; padding: 3px 7px 6px 9px; background: #ddd9c3; border: 2px solid #8f8450; }
.menu h2 { margin: 3px 0 0 -110px; font-size: 15px; line-height: 20px; color: #000; white-space: nowrap; }
.rows { display: flex; flex-direction: column; gap: 3px; }
.mrow { display: flex; height: 31px; }
.mlabel { width: 64px; font-size: 10px; font-weight: 700; line-height: 26px; color: #000; white-space: nowrap; }
.cells { display: grid; grid-template-columns: repeat(7, 1fr); gap: 2px; width: 498px; }
.cells a { display: flex; align-items: center; justify-content: center; text-align: center; font-size: 9px; line-height: 11px; color: #fff; text-decoration: none; white-space: nowrap; box-shadow: 0 1px 2px #8a866f; }
.green a { background: linear-gradient(#9cc540, #75952f); }
.blue a { background: #4f81bd; }
.blue a, .amber a { padding-bottom: 4px; }
.amber a { background: linear-gradient(#ff9130, #cb6c1d); }
.yellow a { background: #ff0; color: #7f7f56; line-height: 9px; padding-bottom: 4px; }

/* Scroll bars */
.vscroll { display: flex; flex-direction: column; width: 21px; padding: 5px 3px 0; flex: none; }
.vscroll button, .hscroll button { display: flex; align-items: center; justify-content: center; width: 15px; height: 15px; flex: none; background: #fff; border: 1px solid #ababab; }
.track { flex: 1; background: #dadada; }
.thumb { background: #fff; border: 1px solid #ababab; }
.vscroll .thumb { height: 64%; }
.hscroll { display: flex; width: 218px; margin: auto 21px auto 0; flex: none; }
.hscroll .thumb { width: 65%; height: 15px; }

/* Sheet tabs */
.sheets { display: flex; align-items: center; flex: none; height: 27px; }
.arrow { display: flex; justify-content: center; width: 28px; }
.arrow:first-child { margin-left: 15px; }
.more { width: 28px; color: #217346; font-weight: 700; font-size: 14px; line-height: 14px; }
.stabs { display: flex; flex: 1; min-width: 0; overflow: hidden; gap: 5px; height: 27px; padding: 2px 0 3px 4px; font-size: 13px; }
.stab { flex: none; padding: 0 11px 2px; background: #0070c0; color: #fff; white-space: nowrap; }
.s-green { padding: 0 10px 2px; background: #9bbb59; color: #222; }
.s-on { margin: 0 -2px 0 -3px; padding: 0 12px; background: linear-gradient(#fff, #a9cbe8); border: solid #e6e6e6; border-width: 0 2px; border-bottom: 2px solid #217346; color: #217346; font-size: 12px; font-weight: 700; }
.s-last { flex: 0 1 auto; min-width: 0; overflow: hidden; text-overflow: clip; text-align: left; }
.add { display: flex; margin-left: 5px; }
.sheets .dots { margin: auto 15px auto 20px; }

/* Status bar */
.status { display: flex; align-items: center; flex: none; height: 19px; background: #f1f1f1; border-top: 1px solid #c6c6c6; font-size: 11px; }
.ready { margin-right: auto; padding-left: 7px; }
.view { display: flex; align-items: center; justify-content: center; width: 38px; height: 18px; }
.view-on { background: #c6c6c6; }
.zoom { display: flex; align-items: center; margin-left: 6px; gap: 6px; }
.zoom button { display: flex; }
.zoom input { appearance: none; width: 96px; height: 12px; background: linear-gradient(#ababab, #ababab) center / 100% 1px no-repeat, linear-gradient(#ababab, #ababab) center / 1px 6px no-repeat; }
.zoom input::-webkit-slider-thumb { appearance: none; width: 4px; height: 11px; background: #555; }
.percent { width: 56px; padding-left: 15px; }
```
